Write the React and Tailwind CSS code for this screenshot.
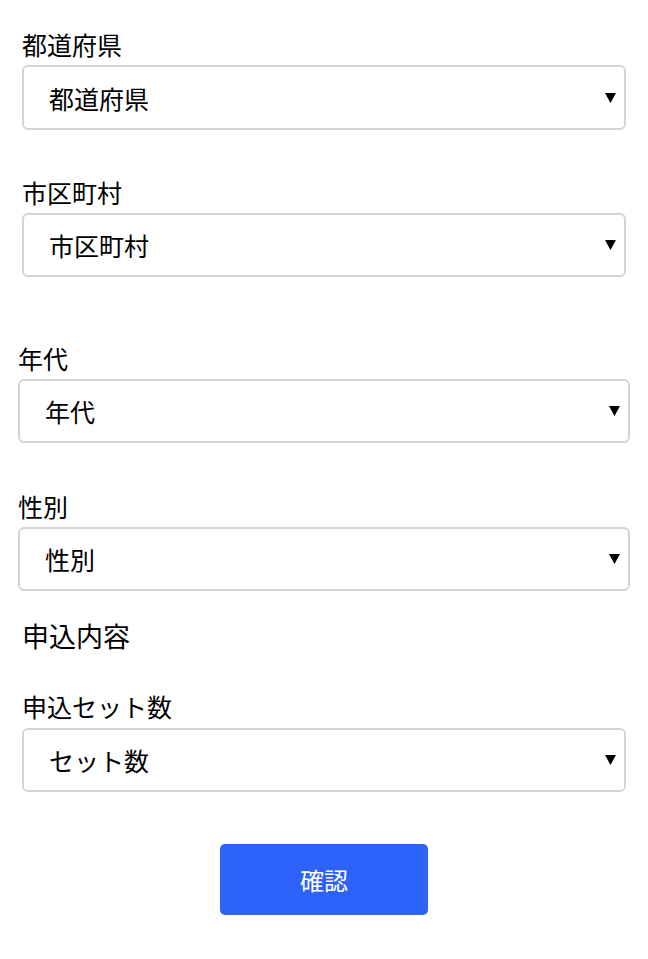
const fieldFont = { fontFamily: '"Noto Sans CJK JP", "Noto Sans", sans-serif' };

const Arrow = () => (
  <svg width="11" height="10" viewBox="0 0 11 10" className="shrink-0">
    <polygon points="0,0 11,0 5.5,10" fill="#000" />
  </svg>
);

const SelectBox = ({ value, className = "" }) => (
  <div
    className={`flex items-center justify-between h-[64px] rounded-[6px] border-2 border-[#d4d4d4] bg-white pl-[25px] pr-[8px] ${className}`}
  >
    <span className="text-[25px] leading-[32px] text-black">{value}</span>
    <Arrow />
  </div>
);

const Field = ({ label, value, className = "", boxClass = "" }) => (
  <div className={className}>
    <div className="text-[25px] leading-[32px] text-black">{label}</div>
    <SelectBox value={value} className={boxClass} />
  </div>
);

export default function App() {
  return (
    <div className="w-[648px] min-h-[959px] bg-white" style={fieldFont}>
      <div className="px-[22px] pt-[28px]">
        <Field label="都道府県" value="都道府県" boxClass="mt-[5px] h-[65px]" />
        <Field label="市区町村" value="市区町村" className="mt-[46px]" boxClass="mt-[5px]" />
      </div>

      <div className="px-[18px]">
        <Field label="年代" value="年代" className="mt-[65px]" boxClass="mt-[5px]" />
        <Field label="性別" value="性別" className="mt-[47px]" boxClass="mt-[5px]" />
      </div>

      <div className="px-[22px]">
        <div className="mt-[28px] text-[27px] leading-[34px] text-black">申込内容</div>
        <Field label="申込セット数" value="セット数" className="mt-[37px]" boxClass="mt-[6px]" />
      </div>

      <div className="flex justify-center mt-[52px]">
        <button className="w-[208px] h-[71px] rounded-[5px] bg-[#2d62f9] text-white text-[24px] leading-[32px]">
          確認
        </button>
      </div>
    </div>
  );
}
